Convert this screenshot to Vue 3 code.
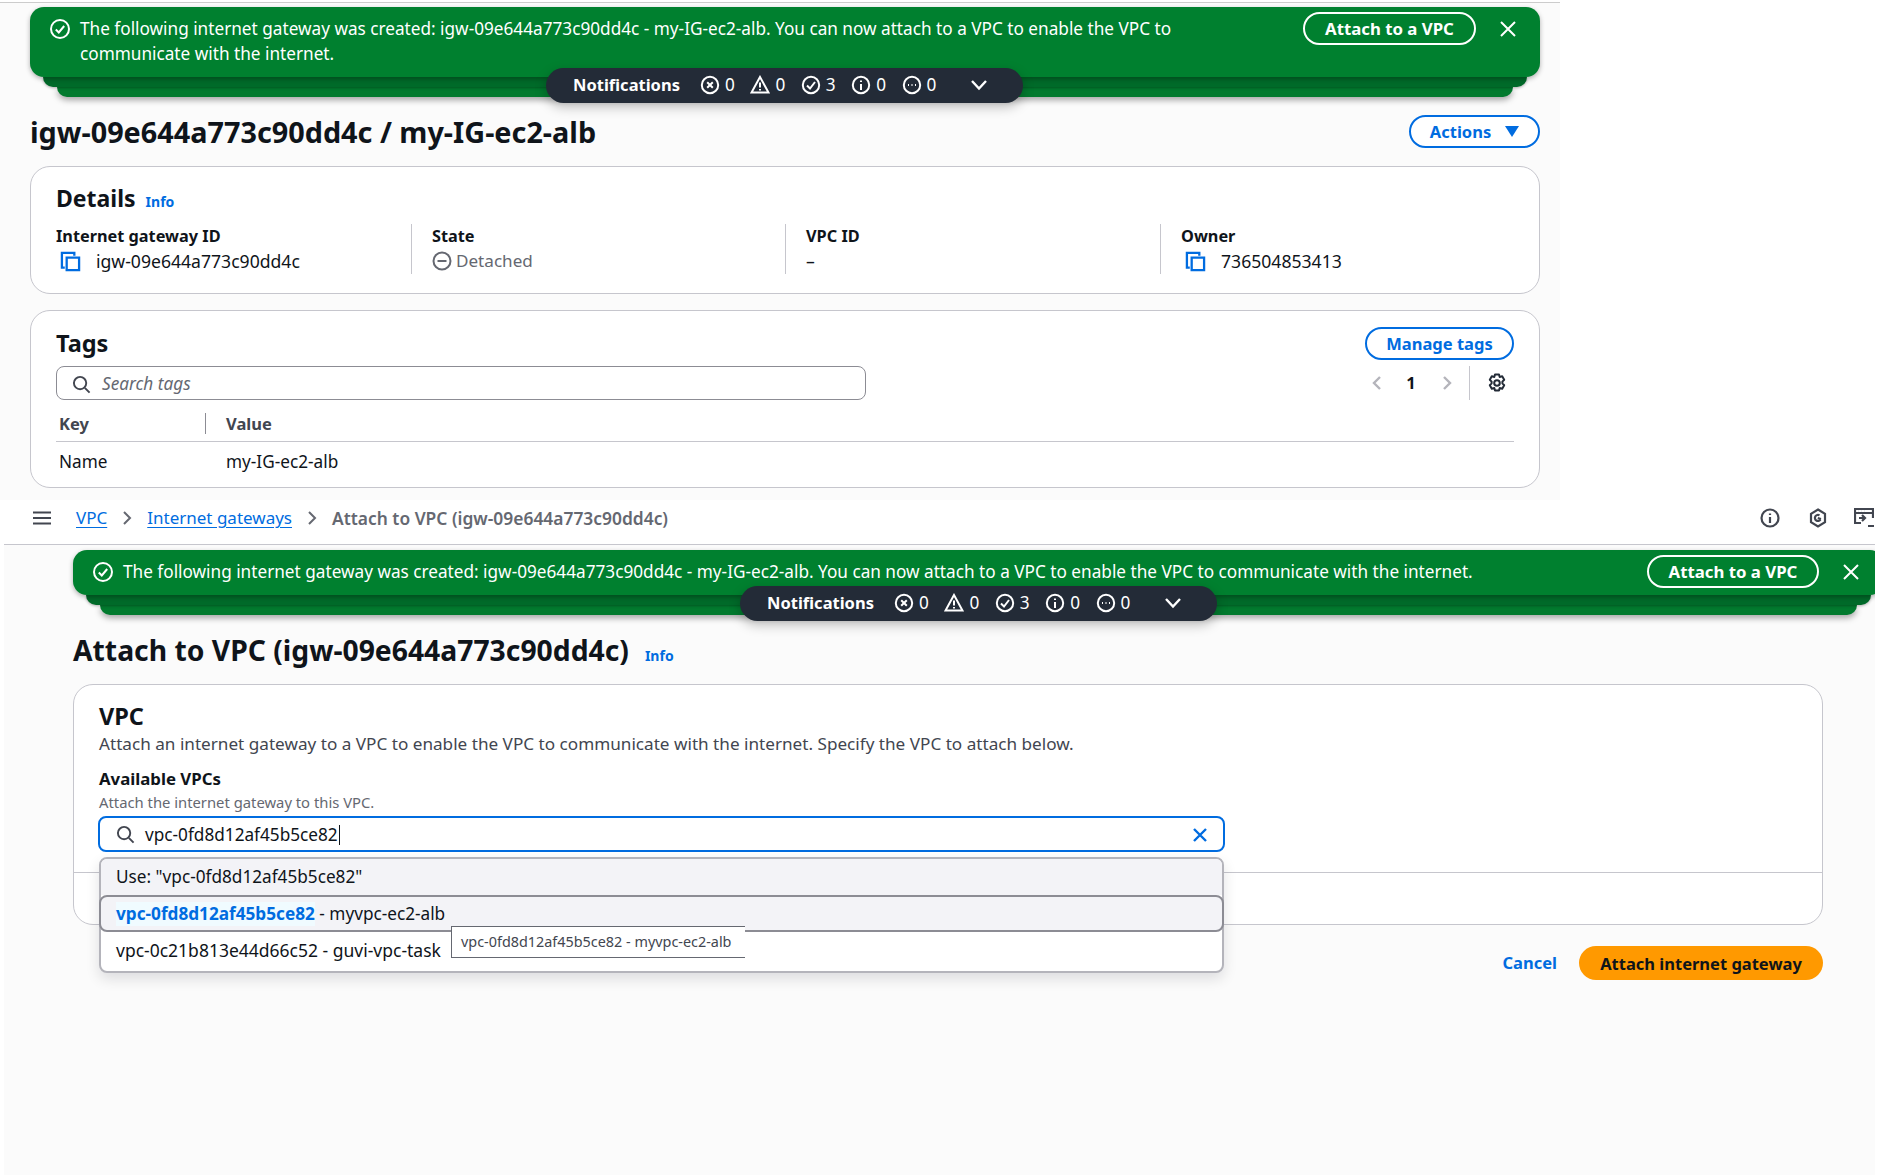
<template>
  <div class="page">
    <section class="shot shot-top">
      <div class="stack">
        <div class="flash flash-wrap">
          <svg class="status" viewBox="0 0 20 20"><circle cx="10" cy="10" r="9" /><path d="M5.800 10.500l3 3 5.400-6.500" /></svg>
          <div class="flash-text">The following internet gateway was created: igw-09e644a773c90dd4c - my-IG-ec2-alb. You can now attach to a VPC to enable the VPC to communicate with the internet.</div>
          <button class="flash-btn">Attach to a VPC</button>
          <svg class="flash-x" viewBox="0 0 16 16"><path d="M1 1l14 14M15 1L1 15" /></svg>
        </div>
        <div class="layer l2"></div>
        <div class="layer l3"></div>
        <div class="pill pill-top">
          <b class="pill-title">Notifications</b>
          <span v-for="c in counts" :key="c.kind" class="count">
            <svg class="count-ic" viewBox="0 0 20 20">
              <path v-if="c.kind === 'warn'" d="M10 2L1.500 17.500h17zM10 7.500v5M10 14v1.500" />
              <template v-else>
                <circle cx="10" cy="10" r="8.200" />
                <path v-if="c.kind === 'err'" d="M7.200 7.200l5.600 5.600M12.800 7.200l-5.600 5.600" />
                <path v-if="c.kind === 'ok'" d="M6 10.500l3 3 5-6.500" />
                <path v-if="c.kind === 'info'" d="M10 9v6M10 5.500v1.500" />
                <path v-if="c.kind === 'more'" d="M6 10h1M9.500 10h1M13 10h1" />
              </template>
            </svg>
            {{ c.n }}
          </span>
          <svg class="pill-chev" viewBox="0 0 18 12"><path d="M2 2l7 7.500L16 2" /></svg>
        </div>
      </div>

      <div class="title-row">
        <h1>igw-09e644a773c90dd4c / my-IG-ec2-alb</h1>
        <button class="btn-line actions">Actions <i class="caret"></i></button>
      </div>

      <div class="card details">
        <div class="card-head">
          <h2>Details</h2>
          <a class="info">Info</a>
        </div>
        <div class="cols">
          <div class="col">
            <div class="lbl">Internet gateway ID</div>
            <div class="val">
              <svg class="copy" viewBox="0 0 22 22"><path d="M5 17.500H2V2h13v3" /><path d="M7 7h13v13H7z" /></svg>
              igw-09e644a773c90dd4c
            </div>
          </div>
          <div class="col">
            <div class="lbl">State</div>
            <div class="val muted">
              <svg class="state" viewBox="0 0 20 20"><circle cx="10" cy="10" r="8.500" /><path d="M5.500 10h9" /></svg>
              Detached
            </div>
          </div>
          <div class="col">
            <div class="lbl">VPC ID</div>
            <div class="val">–</div>
          </div>
          <div class="col">
            <div class="lbl">Owner</div>
            <div class="val">
              <svg class="copy" viewBox="0 0 22 22"><path d="M5 17.500H2V2h13v3" /><path d="M7 7h13v13H7z" /></svg>
              736504853413
            </div>
          </div>
        </div>
      </div>

      <div class="card tags">
        <div class="tags-head">
          <div>
            <h2>Tags</h2>
            <div class="search">
              <svg class="lens" viewBox="0 0 20 20"><circle cx="8.500" cy="8.500" r="6.500" /><path d="M13.500 13.500l5 5" /></svg>
              <span class="placeholder">Search tags</span>
            </div>
          </div>
          <div class="tags-tools">
            <button class="btn-line manage">Manage tags</button>
            <div class="pager">
              <svg class="pg" viewBox="0 0 16 16"><path d="M11 2L5 8l6 6" /></svg>
              <b class="pg-num">1</b>
              <svg class="pg pg-next" viewBox="0 0 16 16"><path d="M5 2l6 6-6 6" /></svg>
              <i class="pg-sep"></i>
              <svg class="gear" viewBox="0 0 20 20">
                <path d="M8 1.500h4l.7 2.500 2.500-.7 2 3.400-1.800 1.900v1.800l1.800 1.900-2 3.400-2.500-.7-.7 2.500H8l-.7-2.500-2.500.7-2-3.400 1.800-1.900V8.600L2.800 6.700l2-3.400 2.500.7z" />
                <circle cx="10" cy="10" r="2.800" />
              </svg>
            </div>
          </div>
        </div>
        <div class="thead">
          <span class="th-key">Key</span>
          <span class="th-val">Value</span>
        </div>
        <div class="trow">
          <span class="td-key">Name</span>
          <span>my-IG-ec2-alb</span>
        </div>
      </div>
    </section>

    <nav class="crumbs">
      <svg class="burger" viewBox="0 0 18 14"><path d="M0 1.500h18M0 7h18M0 12.500h18" /></svg>
      <a class="crumb-link first">VPC</a>
      <svg class="crumb-sep" viewBox="0 0 10 16"><path d="M2 2l6 6-6 6" /></svg>
      <a class="crumb-link">Internet gateways</a>
      <svg class="crumb-sep" viewBox="0 0 10 16"><path d="M2 2l6 6-6 6" /></svg>
      <span class="crumb-cur">Attach to VPC (igw-09e644a773c90dd4c)</span>
      <div class="crumb-tools">
        <svg class="tool" viewBox="0 0 20 20"><circle cx="10" cy="10" r="8.500" /><path d="M10 9v6M10 5.500v1.500" /></svg>
        <svg class="tool" viewBox="0 0 20 20"><path d="M10 1.500l7 4.300v8.400l-7 4.300-7-4.300V5.800z" /><path d="M12.500 11.500a3 3 0 1 1-1-4.100" /><path d="M9.800 10l3.200 1" /></svg>
        <svg class="tool tool-last" viewBox="0 0 20 20"><path d="M7 15H1V1h18v9" /><path d="M1 5h18M4 3h.1M7 3h.1M10 3h.1" /><path d="M5 10h6M8 7l3 3-3 3M14 18h6" /></svg>
      </div>
    </nav>

    <section class="shot shot-bottom">
      <div class="stack wide">
        <div class="flash flash-line">
          <svg class="status" viewBox="0 0 20 20"><circle cx="10" cy="10" r="9" /><path d="M5.800 10.500l3 3 5.400-6.500" /></svg>
          <div class="flash-text">The following internet gateway was created: igw-09e644a773c90dd4c - my-IG-ec2-alb. You can now attach to a VPC to enable the VPC to communicate with the internet.</div>
          <button class="flash-btn">Attach to a VPC</button>
          <svg class="flash-x" viewBox="0 0 16 16"><path d="M1 1l14 14M15 1L1 15" /></svg>
        </div>
        <div class="layer l2"></div>
        <div class="layer l3"></div>
        <div class="pill pill-bottom">
          <b class="pill-title">Notifications</b>
          <span v-for="c in counts" :key="c.kind" class="count">
            <svg class="count-ic" viewBox="0 0 20 20">
              <path v-if="c.kind === 'warn'" d="M10 2L1.500 17.500h17zM10 7.500v5M10 14v1.500" />
              <template v-else>
                <circle cx="10" cy="10" r="8.200" />
                <path v-if="c.kind === 'err'" d="M7.200 7.200l5.600 5.600M12.800 7.200l-5.600 5.600" />
                <path v-if="c.kind === 'ok'" d="M6 10.500l3 3 5-6.500" />
                <path v-if="c.kind === 'info'" d="M10 9v6M10 5.500v1.500" />
                <path v-if="c.kind === 'more'" d="M6 10h1M9.500 10h1M13 10h1" />
              </template>
            </svg>
            {{ c.n }}
          </span>
          <svg class="pill-chev" viewBox="0 0 18 12"><path d="M2 2l7 7.500L16 2" /></svg>
        </div>
      </div>

      <div class="attach-title">
        <h1>Attach to VPC (igw-09e644a773c90dd4c)</h1>
        <a class="info">Info</a>
      </div>

      <div class="card vpc">
        <div class="vpc-body">
          <h2>VPC</h2>
          <p class="desc">Attach an internet gateway to a VPC to enable the VPC to communicate with the internet. Specify the VPC to attach below.</p>
          <div class="field-lbl">Available VPCs</div>
          <div class="field-hint">Attach the internet gateway to this VPC.</div>
          <div class="combo">
            <div class="combo-input">
              <svg class="lens" viewBox="0 0 20 20"><circle cx="8.500" cy="8.500" r="6.500" /><path d="M13.500 13.500l5 5" /></svg>
              <span class="typed">vpc-0fd8d12af45b5ce82</span>
              <svg class="combo-x" viewBox="0 0 16 16"><path d="M2 2l12 12M14 2L2 14" /></svg>
            </div>
            <div class="drop">
              <div class="opt opt-use">Use: "vpc-0fd8d12af45b5ce82"</div>
              <div class="opt opt-hi"><b>vpc-0fd8d12af45b5ce82</b>&nbsp;- myvpc-ec2-alb</div>
              <div class="opt opt-last">vpc-0c21b813e44d66c52 - guvi-vpc-task</div>
              <div class="tip">vpc-0fd8d12af45b5ce82 - myvpc-ec2-alb</div>
            </div>
          </div>
        </div>
      </div>

      <div class="form-actions">
        <a class="cancel">Cancel</a>
        <button class="primary">Attach internet gateway</button>
      </div>
    </section>
  </div>
</template>

<script setup>
const counts = [
  { kind: 'err', n: 0 },
  { kind: 'warn', n: 0 },
  { kind: 'ok', n: 3 },
  { kind: 'info', n: 0 },
  { kind: 'more', n: 0 }
];
</script>

<style>
html,
body {
  background: #fff;
}
</style>

<style scoped>
.page {
  width: 1904px;
  height: 1175px;
  overflow: hidden;
  background: #fff;
  color: #0f141a;
  font-family: "Noto Sans", sans-serif;
  font-size: 17.200px;
  line-height: 24px;
}

svg {
  fill: none;
  stroke: currentColor;
  stroke-width: 2;
  flex-shrink: 0;
}

h1,
h2,
p {
  margin: 0;
}

h1 {
  font-size: 28.800px;
  font-weight: 700;
  line-height: 40px;
}

h2 {
  font-size: 23.500px;
  font-weight: 700;
  line-height: 32px;
}

b,
.cancel {
  font-size: 16.500px;
}

button {
  font-family: inherit;
  cursor: pointer;
}

.shot {
  background: #fbfbfb;
  box-sizing: border-box;
}

.shot-top {
  width: 1560px;
  height: 498px;
  margin-top: 2px;
  border-top: 1px solid #ccc;
  padding: 4px 20px 0 30px;
}

.shot-bottom {
  width: 1871px;
  height: 630px;
  margin-left: 4px;
  padding: 5px 0 0 69px;
  overflow: hidden;
}

.stack {
  position: relative;
}

.stack.wide {
  width: 1811px;
}

.flash {
  position: relative;
  z-index: 3;
  display: flex;
  background: #00802f;
  color: #fff;
  border-radius: 14px;
  box-shadow: 0 2px 5px rgba(0, 0, 0, 0.3);
}

.flash-wrap {
  height: 70px;
  padding: 9px 20px 0 20px;
  box-sizing: border-box;
}

.flash-line {
  height: 45px;
  padding: 9px 0 0 20px;
  box-sizing: border-box;
}

.status {
  width: 20px;
  height: 20px;
  margin-top: 3px;
}

.flash-text {
  margin-left: 10px;
  width: 1110px;
  line-height: 25px;
}

.flash-line .flash-text {
  width: 1524px;
  white-space: nowrap;
}

.flash-btn {
  height: 33px;
  width: 173px;
  margin: -4px 0 0 auto;
  background: transparent;
  border: 2px solid #fff;
  border-radius: 17px;
  color: #fff;
  font-size: 16.800px;
  font-weight: 700;
}

.flash-line .flash-btn {
  width: 172px;
}

.flash-x {
  width: 16px;
  height: 16px;
  margin: 5px 4px 0 24px;
}

.flash-line .flash-x {
  margin-right: 25px;
}

.layer {
  height: 10px;
  background: #00802f;
  border-radius: 0 0 12px 12px;
}

.l2 {
  position: relative;
  z-index: 2;
  margin: 0 13px;
  background: #006a29;
  box-shadow: 0 1px 3px rgba(0, 0, 0, 0.3);
}

.l3 {
  margin: 0 27px;
  background: #027a2e;
  box-shadow: 0 3px 6px rgba(0, 0, 0, 0.35);
}

.pill {
  position: absolute;
  z-index: 4;
  top: 61px;
  width: 477px;
  height: 35px;
  display: flex;
  align-items: center;
  box-sizing: border-box;
  padding: 0 0 1px 27px;
  background: #232b37;
  color: #fff;
  border-radius: 18px;
  box-shadow: 0 4px 12px rgba(0, 0, 0, 0.25);
}

.pill-top {
  left: 516px;
}

.pill-bottom {
  top: 36px;
  left: 667px;
}

.pill-title {
  width: 127px;
}

.count {
  width: 50.400px;
  display: flex;
  align-items: center;
  gap: 5px;
}

.count-ic {
  width: 20px;
  height: 20px;
}

.pill-chev {
  width: 18px;
  height: 12px;
  margin-left: 18px;
  stroke-width: 2.400;
}

.title-row {
  display: flex;
  justify-content: space-between;
  align-items: center;
  height: 33px;
  margin-top: 18px;
}

.btn-line {
  height: 33px;
  background: #fff;
  border: 2px solid #006ce0;
  border-radius: 17px;
  color: #006ce0;
  font-size: 16.500px;
  font-weight: 700;
}

.actions {
  width: 131px;
  display: flex;
  align-items: center;
  justify-content: center;
  gap: 14px;
}

.caret {
  width: 0;
  height: 0;
  border-left: 7px solid transparent;
  border-right: 7px solid transparent;
  border-top: 11px solid #006ce0;
}

.card {
  box-sizing: border-box;
  background: #fff;
  border: 1px solid #c6c6cd;
  border-radius: 20px;
}

.details {
  height: 128px;
  margin-top: 18px;
  padding: 15px 25px 0;
}

.details h2 {
  font-size: 23px;
}

.card-head {
  display: flex;
  align-items: baseline;
  gap: 10px;
}

.info {
  color: #006ce0;
  font-size: 14px;
  font-weight: 700;
}

.cols {
  display: grid;
  grid-template-columns: 356px 374px 375px 1fr;
  margin-top: 10px;
}

.col {
  height: 50px;
  padding-left: 20px;
  border-right: 1px solid #c6c6cd;
}

.col:first-child {
  padding-left: 0;
}

.col:last-child {
  border-right: none;
}

.lbl {
  font-size: 16.300px;
  font-weight: 700;
}

.val {
  display: flex;
  align-items: center;
  height: 26px;
  font-size: 17.600px;
  white-space: nowrap;
}

.muted {
  color: #656871;
  font-size: 17.100px;
}

.copy {
  width: 21px;
  height: 21px;
  margin: 0 15px 0 4px;
  color: #006ce0;
  stroke-width: 2.400;
}

.state {
  width: 20px;
  height: 20px;
  margin-right: 4px;
}

.tags {
  height: 178px;
  margin-top: 16px;
  padding: 16px 25px 0;
}

.tags-head {
  display: flex;
  justify-content: space-between;
}

.tags-head h2 {
  line-height: 33px;
}

.search {
  display: flex;
  align-items: center;
  width: 810px;
  height: 34px;
  margin-top: 6px;
  box-sizing: border-box;
  border: 1px solid #8c8c94;
  border-radius: 8px;
  padding: 2px 0 0 15px;
}

.lens {
  width: 19px;
  height: 19px;
  color: #424650;
}

.placeholder {
  margin-left: 11px;
  font-style: italic;
  color: #656871;
}

.tags-tools {
  display: flex;
  flex-direction: column;
  align-items: flex-end;
}

.manage {
  width: 149px;
}

.pager {
  display: flex;
  align-items: center;
  height: 34px;
  margin-top: 6px;
  padding: 0 7px 0 0;
}

.pg {
  width: 16px;
  height: 16px;
  color: #b4b4bb;
  stroke-width: 2.400;
}

.pg-num {
  width: 10px;
  margin-left: 21px;
  text-align: center;
}

.pg-next {
  margin-left: 23px;
}

.pg-sep {
  width: 1px;
  height: 34px;
  margin-left: 14px;
  background: #c6c6cd;
}

.gear {
  width: 20px;
  height: 20px;
  margin-left: 17px;
  color: #232b37;
  stroke-linejoin: round;
}

.thead {
  display: flex;
  height: 28px;
  margin-top: 13px;
  border-bottom: 1px solid #c6c6cd;
  font-size: 16.500px;
  font-weight: 700;
  color: #424650;
}

.th-key {
  width: 146px;
  height: 21px;
  padding-left: 3px;
  line-height: 21px;
  border-right: 1px solid #8c8c94;
}

.th-val {
  padding-left: 20px;
  line-height: 21px;
}

.trow {
  display: flex;
  height: 40px;
  line-height: 40px;
}

.td-key {
  width: 170px;
  padding-left: 3px;
  box-sizing: border-box;
}

.crumbs {
  display: flex;
  align-items: center;
  box-sizing: border-box;
  width: 1871px;
  height: 45px;
  margin-left: 4px;
  padding: 0 0 8px 29px;
  border-bottom: 1px solid #c6c6cd;
}

.burger {
  width: 18px;
  height: 14px;
  color: #424650;
}

.crumb-link {
  color: #006ce0;
  font-size: 17px;
  text-decoration: underline;
  text-underline-offset: 3px;
}

.crumb-link.first {
  margin-left: 25px;
}

.crumb-sep {
  width: 10px;
  height: 16px;
  margin: 0 15px;
  color: #656871;
}

.crumb-cur {
  color: #656871;
  font-size: 17.400px;
  font-weight: 600;
}

.crumb-tools {
  display: flex;
  align-items: center;
  gap: 28px;
  margin-left: auto;
  padding-right: 1px;
  color: #424650;
}

.tool {
  width: 20px;
  height: 20px;
  stroke-width: 2.200;
}

.tool-last {
  margin-left: -2px;
}

.attach-title {
  display: flex;
  align-items: baseline;
  gap: 16px;
  margin-top: 15px;
}

.attach-title h1 {
  font-size: 28.300px;
}

.vpc {
  width: 1750px;
  height: 241px;
  margin-top: 14px;
}

.vpc-body {
  height: 188px;
  padding: 15px 25px 0;
  box-sizing: border-box;
  border-bottom: 1px solid #c6c6cd;
}

.desc {
  color: #424650;
  font-size: 17.150px;
}

.field-lbl {
  margin-top: 12px;
  font-size: 16.800px;
  font-weight: 700;
  line-height: 22px;
}

.field-hint {
  margin-top: 1px;
  color: #656871;
  font-size: 14.800px;
  line-height: 22px;
}

.combo {
  position: relative;
  width: 1127px;
  margin: 3px 0 0 -1px;
}

.combo-input {
  display: flex;
  align-items: center;
  height: 36px;
  box-sizing: border-box;
  padding: 1px 14px 0;
  background: #fff;
  border: 2px solid #006ce0;
  border-radius: 8px;
}

.combo-input .lens {
  margin-left: 2px;
}

.typed {
  margin-left: 10px;
  padding-right: 1px;
  border-right: 1px solid #0f141a;
  line-height: 20px;
}

.combo-x {
  width: 16px;
  height: 16px;
  margin: 0 1px 0 auto;
  color: #006ce0;
  stroke-width: 2.400;
}

.drop {
  position: absolute;
  z-index: 5;
  top: 41px;
  left: 1px;
  width: 1125px;
  box-sizing: border-box;
  background: #fff;
  border: 2px solid #b4b4bb;
  border-radius: 8px;
  box-shadow: 0 6px 14px rgba(0, 7, 22, 0.12);
}

.opt {
  display: flex;
  align-items: center;
  box-sizing: border-box;
  padding-left: 15px;
}

.opt-use {
  height: 36px;
  background: #f3f3f7;
  border-radius: 6px 6px 0 0;
}

.opt-hi {
  height: 37px;
  margin: 0 -2px;
  background: #f3f3f7;
  border: 2px solid #8c8c94;
  border-radius: 8px;
}

.opt-hi b {
  font-size: 17.200px;
  color: #006ce0;
  background: #f0fbff;
}

.opt-last {
  height: 39px;
  padding-bottom: 3px;
  font-size: 17.500px;
}

.tip {
  position: absolute;
  top: 67px;
  left: 350px;
  width: 294px;
  height: 32px;
  box-sizing: border-box;
  padding-left: 9px;
  background: #fff;
  border: 1px solid #656871;
  border-right: none;
  color: #424650;
  font-size: 14.400px;
  line-height: 30px;
}

.form-actions {
  display: flex;
  align-items: center;
  justify-content: flex-end;
  gap: 22px;
  width: 1750px;
  margin-top: 21px;
}

.cancel {
  color: #006ce0;
  font-weight: 700;
}

.primary {
  width: 244px;
  height: 34px;
  background: #ff9900;
  border: none;
  border-radius: 17px;
  color: #0f141a;
  font-size: 16.500px;
  font-weight: 700;
}
</style>
